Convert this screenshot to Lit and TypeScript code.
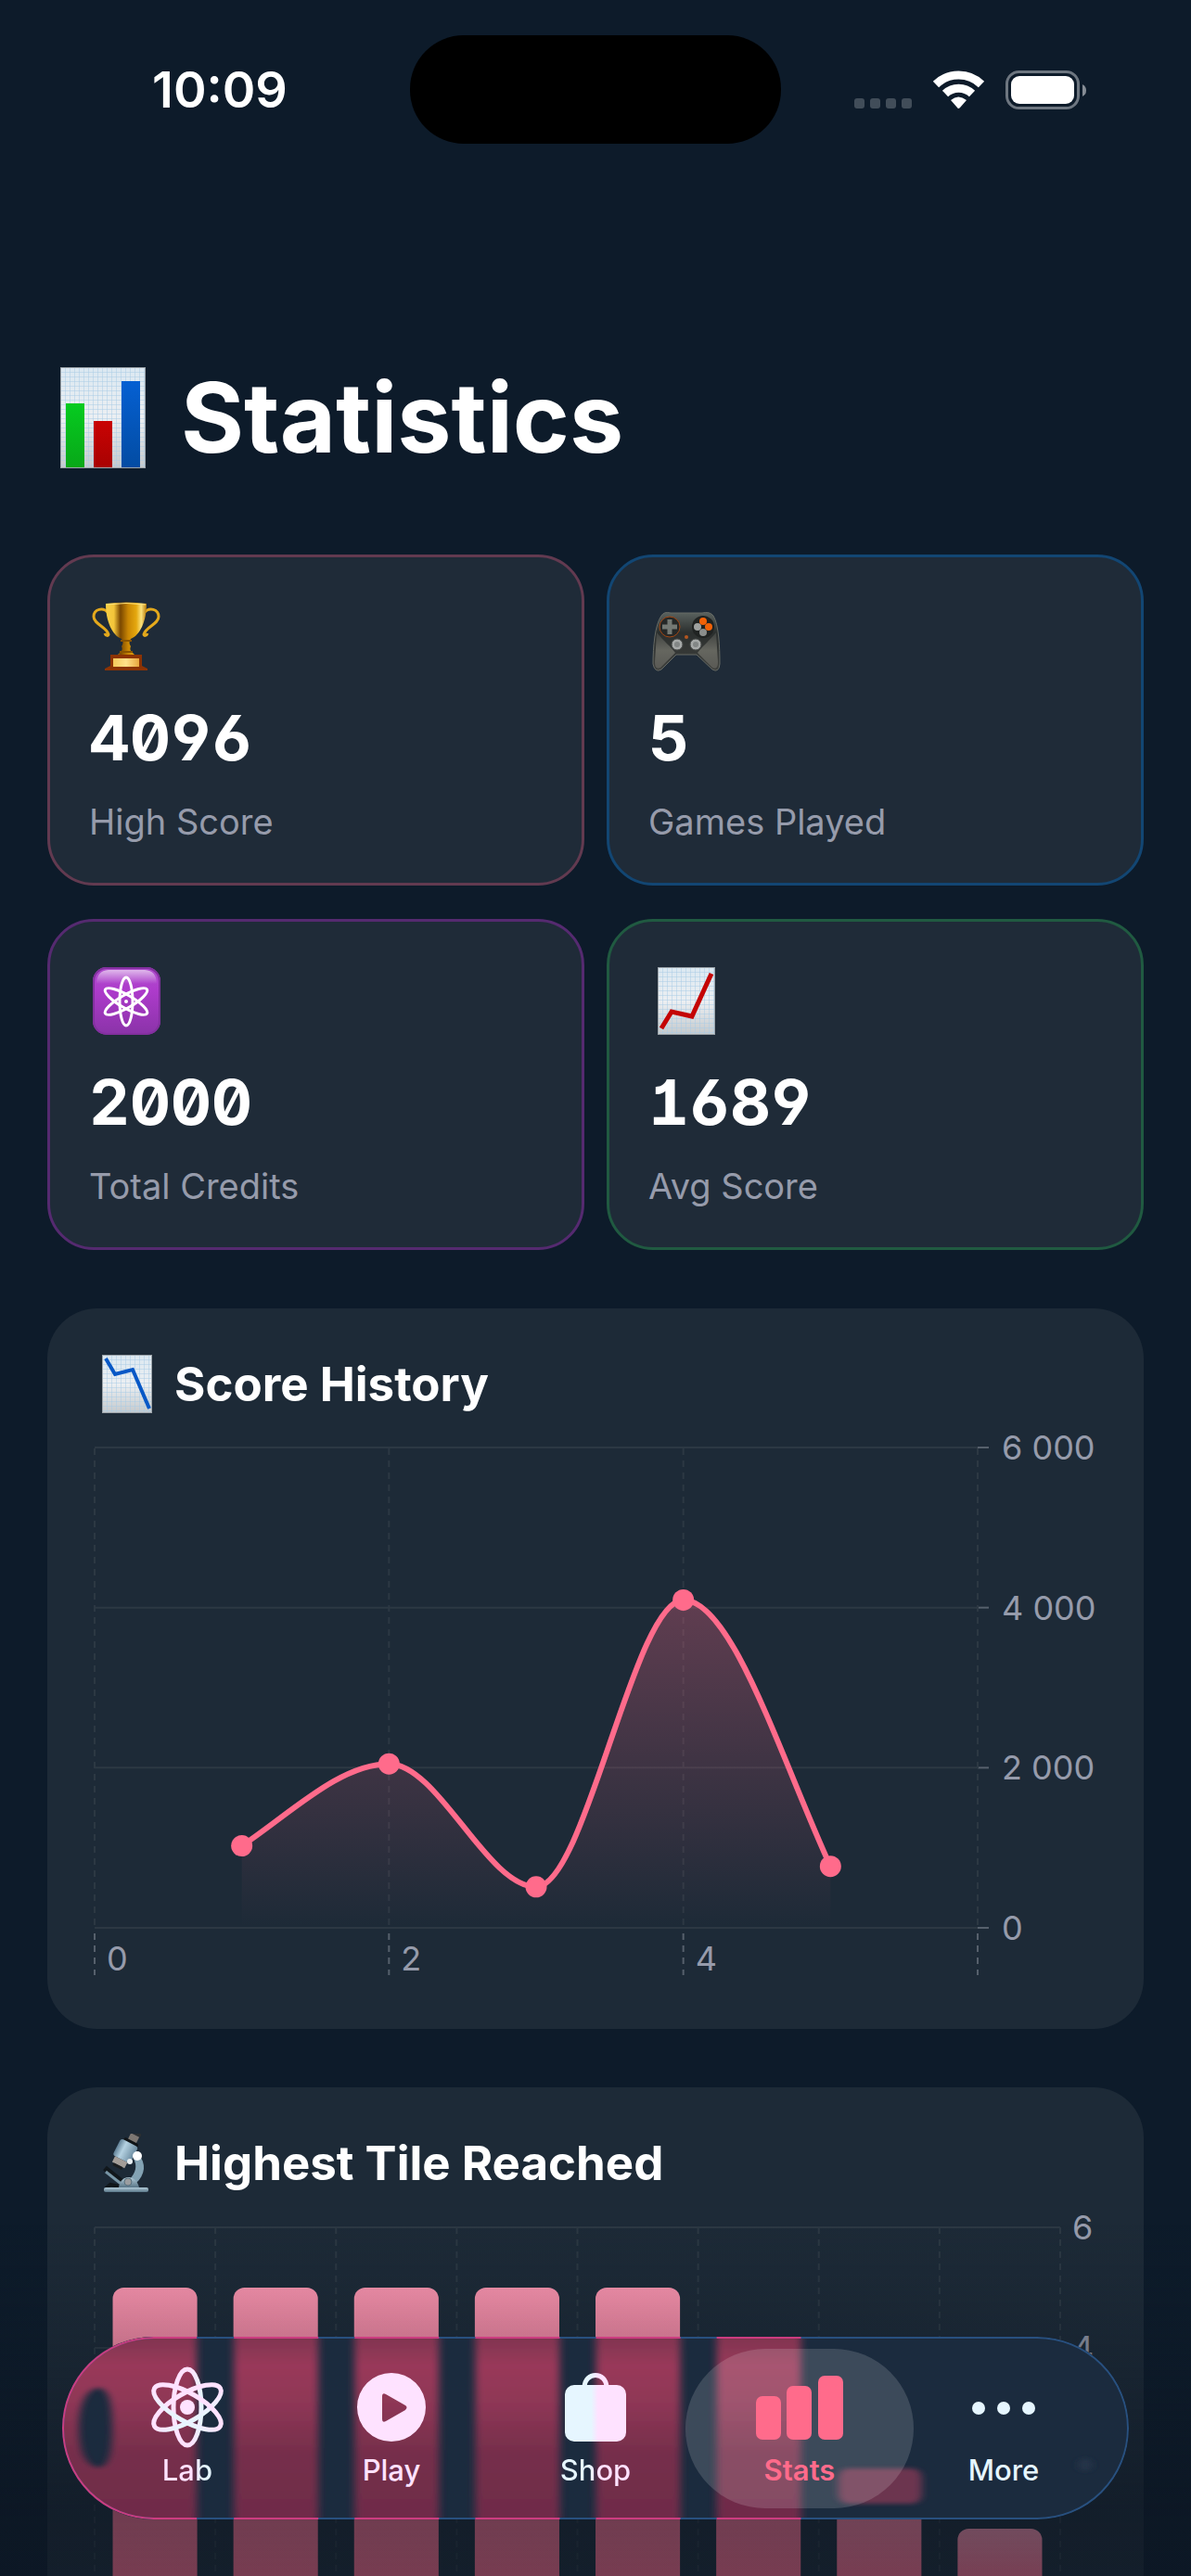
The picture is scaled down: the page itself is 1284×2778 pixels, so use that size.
import { LitElement, css, html, svg, nothing } from 'lit'
import type { SVGTemplateResult } from 'lit'
import { customElement, property, state } from 'lit/decorators.js'
import { classMap } from 'lit/directives/class-map.js'

interface StatInfo {
  icon: string
  value: string
  label: string
  tone: string
}

interface TabInfo {
  id: string
  label: string
}

const STATS: StatInfo[] = [
  { icon: 'trophy', value: '4096', label: 'High Score', tone: 'pink' },
  { icon: 'gamepad', value: '5', label: 'Games Played', tone: 'blue' },
  { icon: 'atom', value: '2000', label: 'Total Credits', tone: 'purple' },
  { icon: 'rising', value: '1689', label: 'Avg Score', tone: 'green' },
]

const SCORES = [1024, 2048, 512, 4096, 768]
const TILES = [5, 5, 5, 5, 5, 4, 2, 1]

const TABS: TabInfo[] = [
  { id: 'lab', label: 'Lab' },
  { id: 'play', label: 'Play' },
  { id: 'shop', label: 'Shop' },
  { id: 'stats', label: 'Stats' },
  { id: 'more', label: 'More' },
]

// graph paper shared by the three chart emoji
const paper = (id: string, w: number, h: number) => svg`
  <defs>
    <linearGradient id="${id}-bg" x1="0" y1="0" x2="0" y2="1">
      <stop offset="0" stop-color="#dbe8f1" />
      <stop offset="0.5" stop-color="#eceff2" />
      <stop offset="1" stop-color="#c4c9cc" />
    </linearGradient>
    <pattern id="${id}-grid" width="5" height="5" patternUnits="userSpaceOnUse">
      <path d="M0 .5h5M.5 0v5" stroke="#a9cbe6" stroke-opacity=".5" fill="none" />
    </pattern>
  </defs>
  <rect width=${w} height=${h} fill="url(#${id}-bg)" />
  <rect width=${w} height=${h} fill="url(#${id}-grid)" />
  <rect x=".5" y=".5" width=${w - 1} height=${h - 1} fill="none" stroke="#9ba3a9" />
`

const barsEmoji = html`
  <svg class="title-icon" viewBox="0 0 92 109" aria-hidden="true">
    <defs>
      <linearGradient id="be-g" x1="0" y1="0" x2="0" y2="1"><stop stop-color="#06cb20" /><stop offset="1" stop-color="#08a818" /></linearGradient>
      <linearGradient id="be-r" x1="0" y1="0" x2="0" y2="1"><stop stop-color="#c90303" /><stop offset="1" stop-color="#a80202" /></linearGradient>
      <linearGradient id="be-b" x1="0" y1="0" x2="0" y2="1"><stop stop-color="#0560d2" /><stop offset="1" stop-color="#034ca3" /></linearGradient>
    </defs>
    ${paper('be', 92, 109)}
    <rect x="6" y="39" width="20" height="69" fill="url(#be-g)" />
    <rect x="36" y="58" width="20" height="50" fill="url(#be-r)" />
    <rect x="66" y="15" width="20" height="93" fill="url(#be-b)" />
  </svg>
`

const fallingEmoji = html`
  <svg class="panel-icon" viewBox="0 0 71 64" aria-hidden="true">
    <g transform="translate(8 0)">
      ${paper('fe', 54, 63)}
      <path d="M4 4 14 21 33 16 51 58" fill="none" stroke="#0758c6" stroke-width="4" />
    </g>
  </svg>
`

const microscopeEmoji = html`
  <svg class="panel-icon" viewBox="0 0 71 64" aria-hidden="true">
    <defs>
      <linearGradient id="ms-tube" x1="0" y1="0" x2="1" y2="0">
        <stop offset="0" stop-color="#5f7f95" /><stop offset=".35" stop-color="#b5d2e2" /><stop offset="1" stop-color="#6b8ba0" />
      </linearGradient>
      <linearGradient id="ms-base" x1="0" y1="0" x2="0" y2="1">
        <stop offset="0" stop-color="#b3ccd9" /><stop offset="1" stop-color="#587587" />
      </linearGradient>
    </defs>
    <path d="M47 22C56 32 55 44 44 54L37 50C45 42 46 34 42 27Z" fill="#83a2b3" />
    <path d="M11 37 32 54" stroke="#11171b" stroke-width="6" />
    <path d="M12 41 31 56" stroke="#7896a6" stroke-width="3" />
    <path d="M12 59 17 55 27 57" fill="none" stroke="#11171b" stroke-width="4" />
    <g transform="rotate(27 31 22)">
      <rect x="27" y="-6" width="12" height="4" rx="2" fill="#2b2f32" />
      <rect x="28" y="-2" width="10" height="8" fill="#7d7772" />
      <rect x="24" y="5" width="17" height="5" rx="2" fill="#101417" />
      <rect x="21" y="8" width="21" height="20" rx="3" fill="url(#ms-tube)" />
      <rect x="24" y="28" width="15" height="7" fill="#a39d98" />
      <rect x="26" y="35" width="11" height="3" rx="1" fill="#1b1e20" />
    </g>
    <circle cx="46" cy="24" r="5" fill="#fff" />
    <circle cx="38" cy="30" r="3" fill="#e9eff2" />
    <path d="M26 58C28 44 44 43 48 58Z" fill="url(#ms-base)" />
    <circle cx="36" cy="52" r="4" fill="#9a9da0" stroke="#59707d" />
    <rect x="10" y="58" width="48" height="5" rx="2" fill="url(#ms-base)" />
  </svg>
`

const STAT_ICONS: Record<string, SVGTemplateResult> = {
  trophy: svg`
    <defs>
      <linearGradient id="tr-cup">
        <stop offset="0" stop-color="#f7cf46" /><stop offset=".2" stop-color="#f3c53a" />
        <stop offset=".36" stop-color="#7a4700" /><stop offset=".55" stop-color="#c98604" />
        <stop offset=".75" stop-color="#e5a80f" /><stop offset=".87" stop-color="#fbe27c" />
        <stop offset="1" stop-color="#b67806" />
      </linearGradient>
      <linearGradient id="tr-plate"><stop stop-color="#f5c95a" /><stop offset=".5" stop-color="#ffe08a" /><stop offset="1" stop-color="#e8a63e" /></linearGradient>
    </defs>
    <path d="M21 13C15 6 5 9 5 17C5 25 19 28 21 36C21 38 18 38 17 35" fill="none" stroke="#e4a91c" stroke-width="3" />
    <path d="M59 13C65 6 75 9 75 17C75 25 61 28 59 36C59 38 62 38 63 35" fill="none" stroke="#e4a91c" stroke-width="3" />
    <path d="M18 3Q40 0 62 3C62 22 55 37 45 41Q42 45 45 49Q43 53 47 56L51 60H29L33 56Q37 53 35 49Q38 45 35 41C25 37 18 22 18 3Z" fill="url(#tr-cup)" />
    <path d="M19 4Q40 1 61 4" fill="none" stroke="#ffe27a" stroke-width="1" />
    <path d="M34 43H46M33 55H47" stroke="#8a5400" stroke-width="2" />
    <path d="M23 58H57V70L63 73V75H17V73L23 70Z" fill="#8c3304" />
    <rect x="26" y="62" width="28" height="9" fill="url(#tr-plate)" />
  `,
  gamepad: svg`
    <defs>
      <linearGradient id="gp-body" x1="0" y1="0" x2="0" y2="1">
        <stop offset="0" stop-color="#5a625f" /><stop offset=".35" stop-color="#2b2f2e" /><stop offset="1" stop-color="#3f403d" />
      </linearGradient>
      <linearGradient id="gp-grip" x1="0" y1="0" x2="0" y2="1">
        <stop offset="0" stop-color="#3f4240" /><stop offset=".5" stop-color="#65665f" /><stop offset="1" stop-color="#5a5a55" />
      </linearGradient>
    </defs>
    <g transform="translate(2 0)">
      <path d="M12 16Q15 11 22 13H56Q64 11 68 16C74 26 75 50 75 68Q74 78 67 74L50 58H28L12 74Q5 78 3 68C3 50 5 26 12 16Z" fill="url(#gp-body)" stroke="#666a65" />
      <path d="M7 34C15 44 22 49 27 56L11 72Q5 75 5 66Z" fill="url(#gp-grip)" />
      <path d="M71 34C63 44 56 49 51 56L67 72Q73 75 73 66Z" fill="url(#gp-grip)" />
      <circle cx="21" cy="28" r="11" fill="#252827" stroke="#a14715" />
      <path d="M21 20V36M13 28H29" stroke="#747974" stroke-width="5" />
      <circle cx="57" cy="28" r="12" fill="#202322" />
      <circle cx="57" cy="22" r="4" fill="#f26207" />
      <circle cx="63" cy="28" r="4" fill="#f26207" />
      <circle cx="51" cy="28" r="4" fill="#9fa2a0" />
      <circle cx="57" cy="34" r="4" fill="#8b8e8c" />
      <circle cx="39" cy="39" r="2" fill="#b4561f" />
      <circle cx="29" cy="47" r="6" fill="#a6a9a8" stroke="#4a4d4b" />
      <circle cx="49" cy="47" r="6" fill="#a6a9a8" stroke="#4a4d4b" />
      <circle cx="29" cy="47" r="3" fill="#828685" />
      <circle cx="49" cy="47" r="3" fill="#828685" />
    </g>
  `,
  atom: svg`
    <defs>
      <linearGradient id="at-bg" x1="0" y1="0" x2="0" y2="1">
        <stop offset="0" stop-color="#b04fce" /><stop offset=".35" stop-color="#ad3bcb" /><stop offset="1" stop-color="#8a33a8" />
      </linearGradient>
      <linearGradient id="at-shine" x1="0" y1="0" x2="0" y2="1">
        <stop offset="0" stop-color="#fff" stop-opacity=".6" /><stop offset="1" stop-color="#fff" stop-opacity="0" />
      </linearGradient>
    </defs>
    <g transform="translate(1 0)">
      <rect x="3" y="2" width="73" height="73" rx="15" fill="url(#at-bg)" />
      <rect x="4" y="3" width="71" height="71" rx="14" fill="none" stroke="#83309f" stroke-width="2" />
      <path d="M7 20Q7 6 20 5H59Q72 6 72 20Z" fill="url(#at-shine)" />
      <g fill="none" stroke="#fff" stroke-width="3">
        <ellipse cx="39" cy="39" rx="7" ry="26" />
        <ellipse cx="39" cy="39" rx="7" ry="26" transform="rotate(60 39 39)" />
        <ellipse cx="39" cy="39" rx="7" ry="26" transform="rotate(120 39 39)" />
      </g>
      <circle cx="39" cy="39" r="2" fill="#fff" />
    </g>
  `,
  rising: svg`
    <g transform="translate(10 2)">
      ${paper('re', 62, 73)}
      <path d="M4 66 15 48 37 53 58 7" fill="none" stroke="#c40404" stroke-width="5" />
    </g>
  `,
}

const atomRings = svg`
  <g fill="none" stroke-width="5">
    <ellipse cx="45" cy="45" rx="15" ry="41" />
    <ellipse cx="45" cy="45" rx="15" ry="41" transform="rotate(60 45 45)" />
    <ellipse cx="45" cy="45" rx="15" ry="41" transform="rotate(120 45 45)" />
  </g>
`

const TAB_ICONS: Record<string, SVGTemplateResult> = {
  lab: svg`
    <defs>
      <linearGradient id="tab-lab" gradientUnits="userSpaceOnUse" x1="0" y1="0" x2="90" y2="0">
        <stop offset=".54" stop-color="#fee2ff" /><stop offset=".68" stop-color="#e6f6ff" />
      </linearGradient>
    </defs>
    <g stroke="url(#tab-lab)">${atomRings}</g>
    <circle cx="45" cy="45" r="8" fill="#fee2ff" />
  `,
  play: svg`
    <path fill="#fee2ff" fill-rule="evenodd"
      d="M45 8A37 37 0 1 1 45 82A37 37 0 1 1 45 8ZM35 33V58Q35 62 39 60L60 48Q63 45 60 43L39 31Q35 29 35 33Z" />
  `,
  shop: svg`
    <defs>
      <linearGradient id="tab-shop" gradientUnits="userSpaceOnUse" x1="0" y1="0" x2="90" y2="0">
        <stop offset=".45" stop-color="#e6f6ff" /><stop offset=".53" stop-color="#fee2ff" />
      </linearGradient>
    </defs>
    <path d="M33 24C33 6 57 6 57 24" fill="none" stroke="url(#tab-shop)" stroke-width="5" />
    <rect x="12" y="21" width="66" height="61" rx="10" fill="url(#tab-shop)" />
  `,
  stats: svg`
    <g fill="#ff6b8b">
      <rect x="-2" y="33" width="27" height="47" rx="7" />
      <rect x="31" y="22" width="27" height="58" rx="7" />
      <rect x="65" y="11" width="27" height="69" rx="7" />
    </g>
  `,
  more: svg`
    <g fill="#e6f6ff">
      <circle cx="18" cy="46" r="7" />
      <circle cx="45" cy="46" r="7" />
      <circle cx="72" cy="46" r="7" />
    </g>
  `,
}

@customElement('status-bar')
export class StatusBar extends LitElement {
  static styles = css`
    :host {
      display: grid;
      grid-template-columns: 1fr 400px 1fr;
      align-items: center;
      padding: 38px 0 0;
      color: #fff;
    }
    .time { padding-left: 32px; text-align: center; font-size: 54px; font-weight: 600; line-height: 60px; }
    .island { height: 117px; border-radius: 58px; background: #000; }
    .icons { display: flex; justify-content: flex-end; padding-right: 112px; }
    .icons svg { width: 252px; height: 44px; }
  `

  render() {
    return html`
      <div class="time">10:09</div>
      <div class="island"></div>
      <div class="icons">
        <svg viewBox="0 0 252 44" role="img" aria-label="No signal, Wi-Fi, battery full">
          <g fill="#414d59">
            ${[0, 17, 34, 51].map((x) => svg`<rect x=${x + 1} y="31" width="11" height="11" rx="3" />`)}
          </g>
          <g fill="none" stroke="#fff" stroke-width="9">
            <path d="M89 16A35 35 0 0 1 138 16" />
            <path d="M99 26A21 21 0 0 1 128 26" />
          </g>
          <path d="M105 33Q113 26 122 33L115 41Q113 43 112 41Z" fill="#fff" />
          <rect x="165.500" y="2.500" width="77" height="39" rx="13" fill="none" stroke="#6d7680" stroke-width="3" />
          <rect x="170" y="7" width="68" height="30" rx="9" fill="#fff" />
          <path d="M247 16Q251 18 251 22.500Q251 27 247 29Z" fill="#868d95" />
        </svg>
      </div>
    `
  }
}

@customElement('stat-card')
export class StatCard extends LitElement {
  @property({ attribute: false }) stat!: StatInfo

  static styles = css`
    .card {
      display: flex;
      flex-direction: column;
      padding: 47px 42px 42px;
      border: 3px solid;
      border-radius: 50px;
      background: #1f2b38;
    }
    .pink { border-color: #623a50; }
    .blue { border-color: #124673; }
    .purple { border-color: #552a70; }
    .green { border-color: #205a41; }
    svg { width: 80px; height: 76px; }
    .value {
      margin-top: 29px;
      font-size: 68px;
      font-weight: 700;
      line-height: 84px;
      color: #fff;
      font-feature-settings: 'tnum', 'zero', 'cv01', 'cv03', 'cv04';
    }
    .label { margin-top: 25px; font-size: 38px; line-height: 48px; color: #969bab; }
  `

  render() {
    const { icon, value, label, tone } = this.stat
    return html`
      <div class="card ${tone}">
        <svg viewBox="0 0 80 76" aria-hidden="true">${STAT_ICONS[icon]}</svg>
        <div class="value">${value}</div>
        <div class="label">${label}</div>
      </div>
    `
  }
}

const chartStyles = css`
  :host { display: block; }
  svg { display: block; width: 100%; height: auto; overflow: visible; }
  .grid { stroke: #2c3843; stroke-width: 2; fill: none; }
  .dash { stroke-dasharray: 7 6; }
  .tick { stroke: #56606c; stroke-width: 2; fill: none; }
  text { font-size: 36px; fill: #969bab; }
`

@customElement('score-chart')
export class ScoreChart extends LitElement {
  @property({ attribute: false }) scores: number[] = []

  static styles = chartStyles

  private _x(i: number) { return (i * 952) / 6 }
  private _y(v: number) { return 537 - (v * 518) / 6000 }

  // monotone cubic through all points
  private _line() {
    const pts = this.scores.map((v, i) => [this._x(i + 1), this._y(v)])
    const n = pts.length
    const dx = 952 / 6
    const s = pts.slice(1).map((p, i) => (p[1] - pts[i][1]) / dx)
    const m = pts.map((_, i) => {
      if (i === 0) return s[0] * 1.2
      if (i === n - 1) return s[n - 2] * 1.2
      const a = s[i - 1]
      const b = s[i]
      return a * b <= 0 ? 0 : (2 * a * b) / (a + b)
    })
    let d = `M${pts[0][0]} ${pts[0][1]}`
    for (let i = 1; i < n; i++) {
      const [x0, y0] = pts[i - 1]
      const [x1, y1] = pts[i]
      d += `C${x0 + dx / 3} ${y0 + (m[i - 1] * dx) / 3} ${x1 - dx / 3} ${y1 - (m[i] * dx) / 3} ${x1} ${y1}`
    }
    return d
  }

  render() {
    const line = this._line()
    return html`
      <svg viewBox="0 0 1080 595" role="img" aria-label="Score per game">
        <defs>
          <linearGradient id="area" x1="0" y1="0" x2="0" y2="1">
            <stop offset="0" stop-color="#ff6b8b" stop-opacity=".3" />
            <stop offset="1" stop-color="#ff6b8b" stop-opacity="0" />
          </linearGradient>
        </defs>
        ${[0, 2000, 4000, 6000].map((v) => svg`
          <path class="grid" d="M0 ${this._y(v)}H952" />
          <path class="tick" d="M952 ${this._y(v)}h12" />
          <text x="978" y=${this._y(v) + 13}>${v ? `${v / 1000}\u00a0000` : '0'}</text>
        `)}
        ${[0, 2, 4, 6].map((v) => svg`
          <path class="grid dash" d="M${this._x(v)} 20V537" />
          <path class="tick dash" d="M${this._x(v)} 543V588" />
          ${v < 6 ? svg`<text x=${this._x(v) + 13} y="583">${v}</text>` : nothing}
        `)}
        <path d="${line}V537H${this._x(1)}Z" fill="url(#area)" />
        <path d=${line} fill="none" stroke="#ff6b8b" stroke-width="6" />
        ${this.scores.map((v, i) => svg`<circle cx=${this._x(i + 1)} cy=${this._y(v)} r="11.500" fill="#ff6b8b" />`)}
      </svg>
    `
  }
}

@customElement('tile-chart')
export class TileChart extends LitElement {
  @property({ attribute: false }) tiles: number[] = []

  static styles = chartStyles

  private _y(v: number) { return 410 - v * 65 }

  render() {
    const step = 1041 / this.tiles.length
    return html`
      <svg viewBox="0 0 1080 480" role="img" aria-label="Highest tile per game">
        <defs>
          <linearGradient id="bar" x1="0" y1="0" x2="0" y2="1">
            <stop offset="0" stop-color="#ff96b1" />
            <stop offset="1" stop-color="#ff6b8b" />
          </linearGradient>
        </defs>
        ${[2, 4, 6].map((v) => svg`
          <path class="grid" d="M0 ${this._y(v)}H1041" />
          <text x="1054" y=${this._y(v) + 13}>${v}</text>
        `)}
        ${[...this.tiles, 0].map((_, i) => svg`<path class="grid dash" d="M${i * step} 20V410" />`)}
        ${this.tiles.map((v, i) => svg`
          <rect x=${i * step + step * 0.15} y=${this._y(v)} width=${step * 0.7} height=${v * 65} rx="12" fill="url(#bar)" />
        `)}
      </svg>
    `
  }
}

@customElement('tab-bar')
export class TabBar extends LitElement {
  @state() private _active = 'stats'

  static styles = css`
    :host { display: block; }
    nav {
      display: grid;
      grid-template-columns: repeat(5, 1fr);
      position: relative;
      padding: 13px 25px 12px;
      border-radius: 99px;
      overflow: hidden;
      background: #1b2b3e;
    }
    /* frosted bars showing through the glass */
    .glass { position: absolute; inset: 0; width: 100%; height: 100%; }
    button {
      display: flex;
      flex-direction: column;
      align-items: center;
      gap: 5px;
      position: relative;
      margin: 0 -13px;
      padding: 18px 0 23px;
      border: 0;
      border-radius: 86px;
      background: none;
      font: 500 31px/36px Inter, 'Liberation Sans', sans-serif;
      color: #e6f6ff;
      cursor: pointer;
    }
    button svg { width: 90px; height: 90px; overflow: visible; }
    .active { background: rgba(255, 255, 255, 0.15); }
    .stats { color: #ff6b8b; font-weight: 600; }
    .play { color: #fee2ff; }
    .lab span, .shop span { background-clip: text; -webkit-background-clip: text; color: transparent; }
    .lab span { background-image: linear-gradient(90deg, #fee2ff 64%, #e6f6ff 76%); }
    .shop span { background-image: linear-gradient(90deg, #e6f6ff 42%, #fee2ff 52%); }
  `

  render() {
    const bands = [0, 1, 2, 3, 4, 5].map((i) => 55 + i * 130)
    return html`
      <nav aria-label="Main">
        <svg class="glass" viewBox="0 0 1149 197" preserveAspectRatio="none" aria-hidden="true">
          <defs>
            <linearGradient id="tint" gradientUnits="userSpaceOnUse" x1="0" y1="0" x2="0" y2="197">
              <stop offset="0" stop-color="#803550" />
              <stop offset=".16" stop-color="#99395a" />
              <stop offset=".35" stop-color="#8f3756" />
              <stop offset=".65" stop-color="#752e4b" />
              <stop offset="1" stop-color="#6f2c4a" />
            </linearGradient>
            <filter id="soft" x="-5%" y="-10%" width="110%" height="120%"><feGaussianBlur stdDeviation="4 2" /></filter>
            <clipPath id="band-clip">
              <rect x="-10" y="-10" width="155" height="220" />
              ${bands.slice(1).map((x) => svg`<rect x=${x} y="-10" width="91" height="220" />`)}
            </clipPath>
          </defs>
          <g filter="url(#soft)">
            <path fill="url(#tint)" fill-rule="evenodd"
              d="M-20 -10H145V207H-20ZM40 55C50 57 54 70 54 98S50 139 40 141C26 140 18 124 18 98S26 56 40 55Z" />
            ${bands.slice(1).map((x) => svg`<rect x=${x} y="-10" width="91" height="217" fill="url(#tint)" />`)}
            <rect x="836" y="142" width="90" height="38" rx="10" fill="#6c3450" />
            <circle cx="1102" cy="138" r="7" fill="#263549" />
          </g>
          <rect x="1" y="1" width="1147" height="195" rx="98" fill="none" stroke="#28507f" stroke-width="2" />
          <rect x="1" y="1" width="1147" height="195" rx="98" fill="none" stroke="#cc3c80" stroke-width="2" clip-path="url(#band-clip)" />
        </svg>
        ${TABS.map((t) => html`
          <button
            class=${classMap({ [t.id]: true, active: t.id === this._active })}
            aria-current=${t.id === this._active ? 'page' : nothing}
            @click=${() => { this._active = t.id }}
          >
            <svg viewBox="0 0 90 90" aria-hidden="true">${TAB_ICONS[t.id]}</svg>
            <span>${t.label}</span>
          </button>
        `)}
      </nav>
    `
  }
}

@customElement('app-root')
export class AppRoot extends LitElement {
  static styles = css`
    :host {
      display: block;
      height: 100vh;
      overflow: hidden;
      background: #0d1b2a;
      font-family: Inter, 'Liberation Sans', sans-serif;
      color: #fff;
    }
    main { padding: 241px 51px 0; }
    h1 {
      display: flex;
      align-items: center;
      gap: 38px;
      margin: 0 0 93px;
      padding-left: 14px;
      font-size: 104px;
      font-weight: 700;
      line-height: 109px;
    }
    .title-icon { width: 92px; height: 109px; }
    .stats { display: grid; grid-template-columns: 1fr 1fr; gap: 36px 24px; }
    .panel {
      margin-top: 63px;
      padding: 50px 51px 51px;
      border-radius: 54px;
      background: #1d2a37;
    }
    h2 {
      display: flex;
      align-items: center;
      gap: 15px;
      margin: 0 0 17px;
      font-size: 51px;
      font-weight: 700;
      line-height: 64px;
    }
    .panel-icon { width: 71px; height: 64px; }
    .fade {
      position: fixed;
      inset: auto 0 0;
      height: 380px;
      background: linear-gradient(
        rgba(13, 24, 36, 0),
        rgba(13, 24, 36, 0.11) 18%,
        rgba(13, 24, 36, 0.22) 32%,
        rgba(13, 22, 34, 0.6) 80%,
        rgba(13, 22, 34, 0.56)
      );
      pointer-events: none;
    }
    tab-bar { position: fixed; left: 67px; right: 67px; bottom: 61px; }
  `

  render() {
    return html`
      <status-bar></status-bar>
      <main>
        <h1>${barsEmoji}Statistics</h1>
        <section class="stats">
          ${STATS.map((s) => html`<stat-card .stat=${s}></stat-card>`)}
        </section>
        <section class="panel">
          <h2>${fallingEmoji}Score History</h2>
          <score-chart .scores=${SCORES}></score-chart>
        </section>
        <section class="panel">
          <h2>${microscopeEmoji}Highest Tile Reached</h2>
          <tile-chart .tiles=${TILES}></tile-chart>
        </section>
      </main>
      <div class="fade"></div>
      <tab-bar></tab-bar>
    `
  }
}
